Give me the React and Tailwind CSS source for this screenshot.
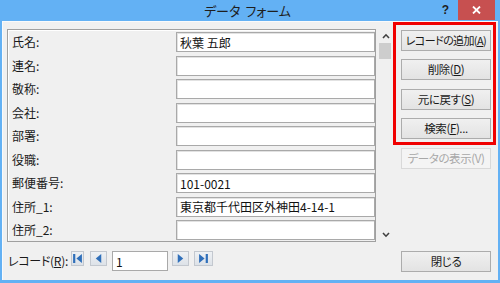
import { useState } from 'react';

const fields = [
  { label: '氏名:', value: '秋葉 五郎' },
  { label: '連名:', value: '' },
  { label: '敬称:', value: '' },
  { label: '会社:', value: '' },
  { label: '部署:', value: '' },
  { label: '役職:', value: '' },
  { label: '郵便番号:', value: '101-0021' },
  { label: '住所_1:', value: '東京都千代田区外神田4-14-1' },
  { label: '住所_2:', value: '' },
];

const font = { fontFamily: '"Noto Sans CJK JP", "Noto Sans", sans-serif', fontFeatureSettings: '"palt"' };

function Btn({ children, className = '', disabled, tight }) {
  return (
    <button
      disabled={disabled}
      className={`w-[90px] h-[21px] flex items-center justify-center whitespace-nowrap leading-none border ${
        tight ? 'text-[11px] tracking-[-0.6px]' : 'text-[11.5px] tracking-[-0.4px]'
      } ${
        disabled ? 'border-[#d9d9d9] bg-[#f4f4f4] text-[#a8a8a8]' : 'border-[#acacac] bg-gradient-to-b from-[#f0f0f0] to-[#e3e3e3] text-[#1a1a1a]'
      } ${className}`}
    >
      {children}
    </button>
  );
}

function NavBtn({ w, children }) {
  return (
    <button className={`${w} h-[15px] flex items-center justify-center border border-[#c3c8cf] bg-gradient-to-b from-[#eef1f4] to-[#dde2e8]`}>
      <svg width="11" height="11" viewBox="0 0 10 10" fill="#2f6fba">{children}</svg>
    </button>
  );
}

function Chevron({ up }) {
  return (
    <svg width="8" height="6" viewBox="0 0 8 6" fill="none" stroke="#404040" strokeWidth="1.6">
      {up ? <path d="M1 5 L4 1.8 L7 5" /> : <path d="M1 1 L4 4.2 L7 1" />}
    </svg>
  );
}

export default function App() {
  const [values, setValues] = useState(fields.map(f => f.value));

  return (
    <div className="w-[500px] h-[283px] bg-[#63b1f4] flex flex-col overflow-hidden" style={font}>
      {/* title bar */}
      <div className="h-[21px] flex items-start shrink-0">
        <div className="flex-1 basis-0" />
        <div className="pt-[3px] flex gap-[5px] text-[13px] leading-[15px] text-[#1e1e1e] whitespace-nowrap">
          <span>データ</span>
          <span>フォーム</span>
        </div>
        <div className="flex-1 basis-0 flex justify-end items-start pr-[5px]">
          <span className="mt-[3px] mr-[9px] text-[12px] leading-[14px] font-bold text-[#1e1e1e]" style={{ fontFamily: '"Liberation Sans", sans-serif' }}>?</span>
          <div className="w-[37px] h-[20px] bg-[#c75050] flex items-center justify-center">
            <svg width="9" height="8" viewBox="0 0 9 8" stroke="#fff" strokeWidth="1.8">
              <path d="M1 0.5 L8 7.5 M8 0.5 L1 7.5" />
            </svg>
          </div>
        </div>
      </div>

      {/* body */}
      <div className="flex-1 mx-[2px] mb-[3px] bg-[#f0f0f0] border-t border-l border-[#f9fafb] flex items-start pl-[4px]">
        {/* left column */}
        <div className="w-[386px] pt-[7px] flex flex-col">
          <div className="flex items-stretch">
            <div className="w-[369px] h-[213px] border border-[#a0a0a0] shadow-[inset_1px_1px_0_#ffffff] pt-[2px]">
              <div className="flex flex-col gap-y-[3.5px]">
                {fields.map((f, i) => (
                  <div key={f.label} className="flex items-center h-[20px]">
                    <div className="w-[168px] pl-[4px] text-[12px] leading-none text-[#1a1a1a] whitespace-nowrap">{f.label}</div>
                    <input
                      value={values[i]}
                      onChange={e => setValues(values.map((v, j) => (j === i ? e.target.value : v)))}
                      className="w-[199px] h-[20px] bg-white border border-[#a9a9a9] shadow-[inset_1px_1px_0_#e2e2e2] px-[3px] text-[12px] leading-none text-[#111] outline-none"
                      style={font}
                    />
                  </div>
                ))}
              </div>
            </div>
            {/* scrollbar */}
            <div className="w-[15px] ml-[2px] h-[213px] flex flex-col items-center">
              <div className="h-[14px] flex items-center justify-center"><Chevron up /></div>
              <div className="w-[12px] h-[16px] bg-[#cdcdcd] -ml-[1px]" />
              <div className="flex-1" />
              <div className="h-[14px] flex items-center justify-center"><Chevron /></div>
            </div>
          </div>

          {/* record navigation */}
          <div className="mt-[9px] flex items-start pl-[1px]">
            <div className="w-[63px] h-[20px] flex items-center text-[12px] tracking-[-0.3px] leading-none text-[#1a1a1a] whitespace-nowrap">
              レコード(<u>R</u>):
            </div>
            <NavBtn w="w-[13px]"><path d="M1 1h2v8H1z M9 1 L4 5 L9 9z" /></NavBtn>
            <div className="ml-[6px]"><NavBtn w="w-[17px]"><path d="M7.5 1 L2.5 5 L7.5 9z" /></NavBtn></div>
            <input
              defaultValue="1"
              className="ml-[5px] w-[56px] h-[20px] bg-white border border-[#a9a9a9] px-[3px] text-[12px] leading-none text-[#111] outline-none"
              style={font}
            />
            <div className="ml-[4px]"><NavBtn w="w-[17px]"><path d="M2.5 1 L7.5 5 L2.5 9z" /></NavBtn></div>
            <div className="ml-[5px]"><NavBtn w="w-[19px]"><path d="M1 1 L6 5 L1 9z M7 1h2v8H7z" /></NavBtn></div>
          </div>
        </div>

        {/* right column */}
        <div className="flex flex-col">
          <div className="w-[103px] border-[3px] border-[#f00000] pt-[5px] pl-[5px] pr-[2px] pb-[3px] flex flex-col">
            <Btn tight>レコードの追加(<u>A</u>)</Btn>
            <Btn className="mt-[8px]">削除(<u>D</u>)</Btn>
            <Btn className="mt-[9px]">元に戻す(<u>S</u>)</Btn>
            <Btn className="mt-[8px]">検索(<u>F</u>)...</Btn>
          </div>
          <Btn disabled className="ml-[8px] mt-[3px]">データの表示(V)</Btn>
          <Btn className="ml-[8px] mt-[82px]">閉じる</Btn>
        </div>
      </div>
    </div>
  );
}
